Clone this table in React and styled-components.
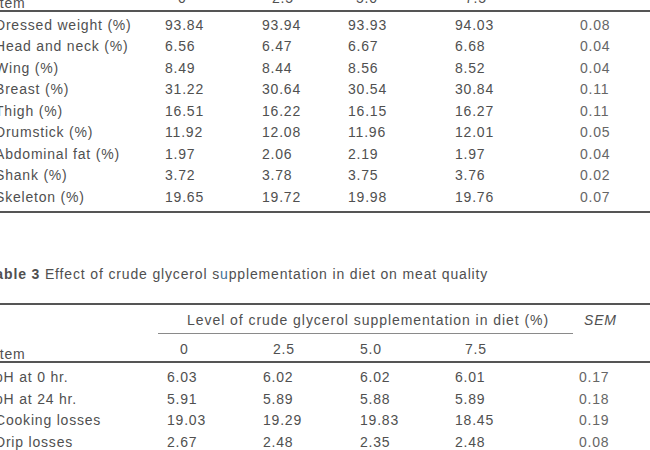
import React from "react";
import styled, { createGlobalStyle } from "styled-components";

const Global = createGlobalStyle`
  html, body { margin: 0; padding: 0; background: #fff; overflow: hidden; }
  body { width: 650px; height: 450px; }
`;

const Sheet = styled.div`
  width: 655px;
  margin-left: -5px;
  font-family: "Liberation Sans", Arial, sans-serif;
  font-size: 14px;
  letter-spacing: 0.8px;
  color: #505050;
`;

const Table = styled.div`
  display: grid;
  grid-template-columns: ${(p) => p.$cols};
`;

const Cell = styled.div`
  box-sizing: border-box;
  line-height: 16px;
  height: ${(p) => 21.5 + (p.$top || 0) + (p.$bottom || 0)}px;
  padding-top: ${(p) => p.$top || 0}px;
  padding-bottom: ${(p) => p.$bottom || 0}px;
  display: flex;
  align-items: center;
  white-space: nowrap;
  color: ${(p) => (p.$sem ? "#666" : "inherit")};
`;

const HeadCell = styled.div`
  height: ${(p) => p.$h}px;
  display: flex;
  align-items: flex-end;
  line-height: 14px;
  padding-bottom: ${(p) => p.$pb || 0}px;
  padding-left: ${(p) => p.$indent || 0}px;
  box-sizing: border-box;
  border-bottom: 2px solid #555;
  white-space: nowrap;
`;

const SpanCell = styled.div`
  grid-column: 2 / 6;
  margin-left: -9px;
  margin-right: 6px;
  height: 29px;
  box-sizing: border-box;
  padding-left: 29px;
  padding-top: 7px;
  line-height: 16px;
  letter-spacing: 0.95px;
  border-bottom: 1.5px solid #8a8a8a;
  white-space: nowrap;
`;

const SemHead = styled.div`
  grid-column: 6;
  padding-left: 5px;
  padding-top: 7px;
  line-height: 16px;
  font-style: italic;
`;

const Blank = styled.div`
  grid-column: ${(p) => p.$col};
`;

const Rule = styled.div`
  grid-column: 1 / -1;
  border-top: 2px solid #555;
`;

const Spacer = styled.div`
  grid-column: 1 / -1;
  height: ${(p) => p.$h}px;
`;

const Caption = styled.div`
  margin: 53px 0 21px -8px;
  line-height: 16px;
  letter-spacing: 0.85px;
  white-space: nowrap;
  b { font-weight: bold; }
`;

const Mark = styled.span`
  color: #3f6f96;
`;

const Top = styled.div`
  margin-top: -11px;
`;

const t2 = [
  ["Dressed weight (%)", "93.84", "93.94", "93.93", "94.03", "0.08"],
  ["Head and neck (%)", "6.56", "6.47", "6.67", "6.68", "0.04"],
  ["Wing (%)", "8.49", "8.44", "8.56", "8.52", "0.04"],
  ["Breast (%)", "31.22", "30.64", "30.54", "30.84", "0.11"],
  ["Thigh (%)", "16.51", "16.22", "16.15", "16.27", "0.11"],
  ["Drumstick (%)", "11.92", "12.08", "11.96", "12.01", "0.05"],
  ["Abdominal fat (%)", "1.97", "2.06", "2.19", "1.97", "0.04"],
  ["Shank (%)", "3.72", "3.78", "3.75", "3.76", "0.02"],
  ["Skeleton (%)", "19.65", "19.72", "19.98", "19.76", "0.07"],
];

const t3 = [
  ["pH at 0 hr.", "6.03", "6.02", "6.02", "6.01", "0.17"],
  ["pH at 24 hr.", "5.91", "5.89", "5.88", "5.89", "0.18"],
  ["Cooking losses", "19.03", "19.29", "19.83", "18.45", "0.19"],
  ["Drip losses", "2.67", "2.48", "2.35", "2.48", "0.08"],
];

function Rows({ data, first = 0, last = 0 }) {
  return data.map((r, i) =>
    r.map((c, j) => (
      <Cell
        key={`${i}-${j}`}
        $sem={j === 5}
        $top={i === 0 ? first : 0}
        $bottom={i === data.length - 1 ? last : 0}
      >
        {c}
      </Cell>
    ))
  );
}

const cols2 = "170px 97px 86px 107px 125px 1fr";
const cols3 = "172px 96px 97px 95px 124px 1fr";

export default function App() {
  return (
    <>
      <Global />
      <Sheet>
        <Top>
          <Table $cols={cols2}>
            <HeadCell $h={23}>Item</HeadCell>
            <HeadCell $h={23} $pb={5} $indent={13}>0</HeadCell>
            <HeadCell $h={23} $pb={5} $indent={10}>2.5</HeadCell>
            <HeadCell $h={23} $pb={5} $indent={8}>5.0</HeadCell>
            <HeadCell $h={23} $pb={5} $indent={10}>7.5</HeadCell>
            <HeadCell $h={23} />
            <Rows data={t2} first={2} last={3} />
            <Rule />
          </Table>
        </Top>
        <Caption>
          <b>Table 3</b> Effect of crude glycerol s<Mark>u</Mark>pplementation in diet on meat quality
        </Caption>
        <Table $cols={cols3}>
          <Rule />
          <Blank $col={1} />
          <SpanCell>Level of crude glycerol supplementation in diet (%)</SpanCell>
          <SemHead>SEM</SemHead>
          <HeadCell $h={29}>Item</HeadCell>
          <HeadCell $h={29} $pb={5} $indent={13}>0</HeadCell>
          <HeadCell $h={29} $pb={5} $indent={10}>2.5</HeadCell>
          <HeadCell $h={29} $pb={5} $indent={-2}>5.0</HeadCell>
          <HeadCell $h={29} $pb={5} $indent={10}>7.5</HeadCell>
          <HeadCell $h={29} />
          <Rows data={t3} first={4} />
          <Spacer $h={10} />
        </Table>
      </Sheet>
    </>
  );
}
